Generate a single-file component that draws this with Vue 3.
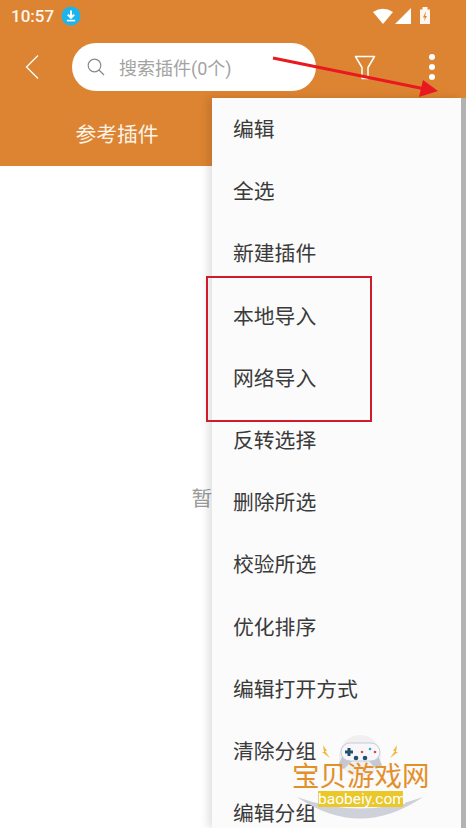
<template>
  <div class="screen">
    <header class="app-header">
      <div class="status-bar">
        <span class="clock">10:57</span>
        <span class="download-dot">
          <svg width="20" height="20" viewBox="0 0 20 20">
            <circle cx="10" cy="10" r="9.500" fill="#1cb4ee" />
            <path d="M10 4.500v7M6.800 8.600l3.200 3.200 3.200-3.200" fill="none" stroke="#fff" stroke-width="2" />
            <path d="M5.800 14.600h8.400" stroke="#fff" stroke-width="1.600" />
          </svg>
        </span>
        <span class="spacer"></span>
        <svg class="status-icons" width="58" height="18" viewBox="0 0 58 18">
          <path d="M0 5Q10-1.500 20 5L10 17Z" fill="#fff" />
          <path d="M22 17L38 1V17Z" fill="#fff" />
          <path d="M47 2.500h2.500V0h5v2.500H57V17H47Z" fill="#fdf6ee" />
          <path d="M52.600 5l-2.600 5.500h1.900l-1 4 3-5.600h-1.900l1-3.900Z" fill="#dc8432" />
        </svg>
      </div>

      <div class="toolbar">
        <button class="icon-btn back-btn">
          <svg width="14" height="26" viewBox="0 0 14 26">
            <path d="M13 1.500L1.500 13 13 24.500" fill="none" stroke="#fff" stroke-width="1.300" />
          </svg>
        </button>
        <div class="search-box">
          <svg width="18" height="18" viewBox="0 0 18 18">
            <circle cx="7.500" cy="7.500" r="6.300" fill="none" stroke="#8a8a8a" stroke-width="1.200" />
            <path d="M12 12L17 17" stroke="#8a8a8a" stroke-width="1.200" />
          </svg>
          <span class="search-hint">搜索插件(0个)</span>
        </div>
        <button class="icon-btn filter-btn">
          <svg width="22" height="25" viewBox="0 0 22 25">
            <path d="M1.500 1.500h19L14 12.500v11l-6 0V12.500Z" fill="none" stroke="#fff" stroke-width="1.500" stroke-linejoin="round" />
          </svg>
        </button>
        <button class="icon-btn more-btn">
          <i></i><i></i><i></i>
        </button>
      </div>

      <div class="tabs">
        <span class="tab">参考插件</span>
      </div>
    </header>

    <main class="content">
      <p class="empty-text">暂无插件</p>
    </main>

    <div class="menu">
      <div v-for="item in menuItems" :key="item" class="menu-item">{{ item }}</div>
    </div>

    <div class="menu-scrollbar"></div>

    <!-- annotations drawn on top of the screenshot -->
    <div class="red-box"></div>
    <svg class="red-arrow" width="466" height="110" viewBox="0 0 466 110">
      <path d="M273 58L425 89" stroke="#e8191f" stroke-width="3" />
      <path d="M438 91L419 97L423 80Z" fill="#e8191f" />
    </svg>

    <div class="watermark">
      <svg class="wm-art" width="160" height="100" viewBox="0 0 160 100">
        <path d="M11 69Q74 112 137 69Q74 92 11 69Z" fill="#cfd1da" />
        <circle cx="74" cy="28" r="21" fill="#f0f0f0" />
        <path d="M59 24Q54 32 52 38L58 41L66 33H83L90 41L96 38Q94 30 89 24Z" fill="#c5c8d0" />
        <rect x="55" y="15" width="39" height="18" rx="9" fill="#f7f7f9" stroke="#c9ccd4" />
        <path d="M59 24h8M63 20v8" stroke="#24506e" stroke-width="3" />
        <circle cx="76" cy="24" r="1.300" fill="#e04848" />
        <circle cx="84" cy="21" r="1.300" fill="#2aa9d6" />
        <circle cx="89" cy="24" r="1.300" fill="#e04848" />
        <circle cx="70" cy="30" r="2.300" fill="#24506e" />
        <circle cx="79" cy="30" r="2.300" fill="#24506e" />
        <path d="M37 17l4 6-2 0 5 7-8-6 2 0ZM111 17l-4 6 2 0-5 7 8-6-2 0Z" fill="#edbb3a" />
      </svg>
      <div class="wm-title">宝贝游戏网</div>
      <div class="wm-url">baobeiy.com</div>
    </div>
  </div>
</template>

<script setup>
const menuItems = [
  '编辑',
  '全选',
  '新建插件',
  '本地导入',
  '网络导入',
  '反转选择',
  '删除所选',
  '校验所选',
  '优化排序',
  '编辑打开方式',
  '清除分组',
  '编辑分组'
]
</script>

<style>
html,
body {
  margin: 0;
  background: #fff;
  overflow: hidden;
}
</style>

<style scoped>
.screen {
  position: relative;
  width: 466px;
  height: 828px;
  overflow: hidden;
  background: #fff;
  font-family: Roboto, "Noto Sans CJK SC", sans-serif;
}

.app-header {
  height: 166px;
  background: #dc8432;
  color: #fff;
}

.status-bar {
  display: flex;
  align-items: center;
  height: 32px;
  padding: 0 35px 0 11px;
}

.clock {
  font-size: 17px;
  font-weight: 500;
  color: #fdf6ee;
}

.download-dot {
  display: flex;
  margin-left: 7px;
}

.spacer {
  flex: 1;
}

.toolbar {
  display: flex;
  align-items: center;
  height: 70px;
}

.icon-btn {
  display: flex;
  align-items: center;
  justify-content: center;
  padding: 0;
  border: 0;
  background: none;
}

.back-btn {
  width: 14px;
  margin-left: 25px;
}

.search-box {
  display: flex;
  align-items: center;
  width: 244px;
  height: 48px;
  margin-left: 33px;
  padding-left: 15px;
  padding-bottom: 1px;
  box-sizing: border-box;
  border-radius: 24px;
  background: #fff;
}

.search-hint {
  margin-left: 14px;
  font-size: 18px;
  color: #a3a3a3;
}

.filter-btn {
  width: 22px;
  margin-left: 38px;
}

.more-btn {
  flex-direction: column;
  gap: 4px;
  width: 12px;
  margin-left: 50px;
}

.more-btn i {
  width: 6px;
  height: 6px;
  border-radius: 50%;
  background: #fff;
}

.tabs {
  display: flex;
  height: 64px;
}

.tab {
  width: 234px;
  line-height: 66px;
  text-align: center;
  font-size: 20.800px;
  color: #fdf3e8;
}

.content {
  display: flex;
  justify-content: center;
  padding-top: 316px;
}

.empty-text {
  margin: 0;
  font-size: 20.800px;
  color: #9a9a9a;
}

.menu {
  position: absolute;
  top: 98px;
  left: 212px;
  width: 249px;
  height: 730px;
  padding-top: 1px;
  box-sizing: border-box;
  overflow: hidden;
  background: #fbfbfb;
  box-shadow: -4px 0 8px rgba(0, 0, 0, 0.12);
}

.menu-item {
  height: 62.200px;
  padding-left: 21px;
  line-height: 62.200px;
  font-size: 20.800px;
  color: #3a3a3a;
}

.menu-scrollbar {
  position: absolute;
  top: 98px;
  right: 0;
  width: 5px;
  height: 730px;
  background: #b2b2b2;
}

.red-box {
  position: absolute;
  top: 276px;
  left: 206px;
  width: 166px;
  height: 146px;
  box-sizing: border-box;
  border: 2px solid #cf1b2b;
}

.red-arrow {
  position: absolute;
  top: 0;
  left: 0;
}

.watermark {
  position: absolute;
  top: 728px;
  left: 286px;
  width: 160px;
  height: 100px;
}

.wm-art {
  position: absolute;
  top: 0;
  left: 0;
}

.wm-title {
  position: absolute;
  top: 35px;
  left: 6px;
  font-size: 27.500px;
  line-height: 28px;
  white-space: nowrap;
  color: #e38f2a;
}

.wm-url {
  position: absolute;
  top: 63px;
  left: 32px;
  width: 85px;
  text-align: center;
  font-size: 15.500px;
  line-height: 16px;
  white-space: nowrap;
  color: #fff;
  background: #eac72a;
}
</style>
